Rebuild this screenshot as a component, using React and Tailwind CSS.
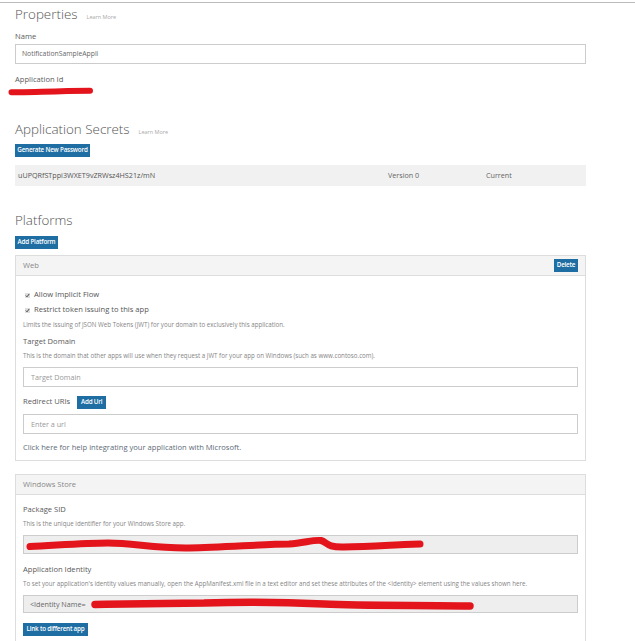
import React from 'react';

const Btn = ({ w, children }) => (
  <div
    className={`${w} h-[13px] flex items-center justify-center bg-[#1f6ea3] text-white text-[6.3px] font-semibold tracking-[-0.2px] leading-none whitespace-nowrap`}
  >
    {children}
  </div>
);

const Check = () => (
  <span className="w-[5px] h-[5px] bg-[#ddd] flex items-center justify-center">
    <svg width="5" height="5" viewBox="0 0 5 5">
      <path d="M0.8 2.6 L2 3.8 L4.2 1" stroke="#444" strokeWidth="1" fill="none" />
    </svg>
  </span>
);

const Heading = ({ children, mt }) => (
  <div className={`${mt} h-[18px] flex items-baseline text-[13.4px] leading-[18px] font-light text-[#555]`}>
    {children}
    <span className="ml-[9px] text-[5.5px] text-[#aaa] font-normal">Learn More</span>
  </div>
);

const Label = ({ children, mt }) => (
  <div className={`${mt} text-[7.6px] leading-[12px] text-[#5a5a5a]`}>{children}</div>
);

const Hint = ({ children, mt }) => (
  <div className={`${mt} text-[6.2px] leading-[10px] text-[#858585] whitespace-nowrap`}>{children}</div>
);

const Input = ({ placeholder, mt }) => (
  <div className={`${mt} h-[20px] border border-[#ccc] bg-white flex items-center px-[7px] text-[7.2px] text-[#999]`}>
    {placeholder}
  </div>
);

export default function App() {
  return (
    <div className="w-[635px] h-[641px] overflow-hidden bg-white font-['Open_Sans',sans-serif] text-[#555]">
      <div className="mt-[2px] border-t border-[#bbb]" />
      <div className="pl-[15px] w-[586px]">
        <Heading mt="mt-[2px]">Properties</Heading>
        <Label mt="mt-[7px]">Name</Label>
        <div className="mt-[2px] h-[20px] border border-[#ccc] flex items-center px-[6px] text-[6.8px] text-[#666]">
          NotificationSampleAppli
        </div>
        <Label mt="mt-[9px]">Application Id</Label>
        <svg className="mt-[2px] ml-[-7px] block" width="86" height="9" viewBox="0 0 86 9">
          <path d="M3.5 5.2 C 20 6, 40 4, 82 3.8" stroke="#e3141c" strokeWidth="6" strokeLinecap="round" fill="none" />
        </svg>

        <Heading mt="mt-[24px]">Application Secrets</Heading>
        <div className="mt-[6px]">
          <Btn w="w-[75px]">Generate New Password</Btn>
        </div>
        <div className="mt-[8px] h-[21px] bg-[#f1f1f1] flex items-center pl-[3px] text-[7.2px] text-[#555]">
          <div className="w-[370px]">uUPQRfSTppi3WXET9vZRWsz4HS21z/mN</div>
          <div className="w-[98px] text-[#666]">Version 0</div>
          <div className="text-[#666]">Current</div>
        </div>

        <div className="mt-[25px] h-[18px] text-[13.4px] leading-[18px] font-light text-[#555]">Platforms</div>
        <div className="mt-[7px]">
          <Btn w="w-[43px]">Add Platform</Btn>
        </div>

        <div className="mt-[6px] border border-[#ddd]">
          <div className="h-[20px] bg-[#f4f4f4] border-b border-[#ddd] flex items-center justify-between pl-[7px] pr-[7px] text-[7.6px] text-[#888]">
            <span>Web</span>
            <Btn w="w-[24px]">Delete</Btn>
          </div>
          <div className="px-[7px] pt-[13px] pb-[7px]">
            <div className="h-[12px] flex items-center gap-[4px] pl-[2px] text-[7.6px] text-[#555]">
              <Check />
              <span>Allow Implicit Flow</span>
            </div>
            <div className="mt-[3px] h-[12px] flex items-center gap-[4px] pl-[2px] text-[7.6px] text-[#555]">
              <Check />
              <span>Restrict token issuing to this app</span>
            </div>
            <Hint mt="mt-[4px]">Limits the issuing of JSON Web Tokens (JWT) for your domain to exclusively this application.</Hint>
            <Label mt="mt-[5px]">Target Domain</Label>
            <Hint mt="mt-[4px]">
              This is the domain that other apps will use when they request a JWT for your app on Windows (such as www.contoso.com).
            </Hint>
            <Input mt="mt-[6px]" placeholder="Target Domain" />
            <div className="mt-[9px] h-[12px] flex items-center gap-[7px]">
              <span className="text-[7.6px] text-[#5a5a5a]">Redirect URIs</span>
              <Btn w="w-[29px]">Add Url</Btn>
            </div>
            <Input mt="mt-[6px]" placeholder="Enter a url" />
            <div className="mt-[7px] text-[7.6px] leading-[12px] text-[#5d6b78]">
              Click here for help integrating your application with Microsoft.
            </div>
          </div>
        </div>

        <div className="mt-[13px] border border-[#ddd] h-[200px]">
          <div className="h-[20px] bg-[#f4f4f4] border-b border-[#ddd] flex items-center pl-[7px] text-[7.6px] text-[#888]">
            Windows Store
          </div>
          <div className="px-[7px] pt-[8px]">
            <Label mt="mt-0">Package SID</Label>
            <Hint mt="mt-[4px]">This is the unique identifier for your Windows Store app.</Hint>
            <div className="relative mt-[6px] h-[19px] bg-[#eee] border border-[#ccc]">
              <svg className="absolute left-0 top-0" width="555" height="19" viewBox="0 0 555 19">
                <path
                  d="M6 10.5 C 30 9.5, 60 7, 84 7 C 110 7, 130 12.5, 165 12 C 200 11.5, 240 8, 265 8 C 280 7, 290 3.5, 297 4.5 C 303 6, 302 11.5, 320 11 C 350 10.5, 380 8, 396 8"
                  stroke="#e3141c"
                  strokeWidth="7"
                  strokeLinecap="round"
                  fill="none"
                />
              </svg>
            </div>
            <Label mt="mt-[9px]">Application Identity</Label>
            <Hint mt="mt-[4px]">
              To set your application's identity values manually, open the AppManifest.xml file in a text editor and set these attributes of the &lt;Identity&gt; element using the values shown here.
            </Hint>
            <div className="relative mt-[6px] h-[18px] bg-[#eee] border border-[#ccc] flex items-center pl-[6px] text-[7.2px] text-[#666]">
              &lt;Identity Name=
              <svg className="absolute left-0 top-0" width="555" height="18" viewBox="0 0 555 18">
                <path
                  d="M71 8.5 C 110 8, 150 7.5, 180 7 C 220 5.5, 250 5.5, 300 8 C 340 10, 400 9, 446 10"
                  stroke="#e3141c"
                  strokeWidth="7.5"
                  strokeLinecap="round"
                  fill="none"
                />
              </svg>
            </div>
            <div className="mt-[10px]">
              <Btn w="w-[65px]">Link to different app</Btn>
            </div>
          </div>
        </div>
      </div>
    </div>
  );
}
